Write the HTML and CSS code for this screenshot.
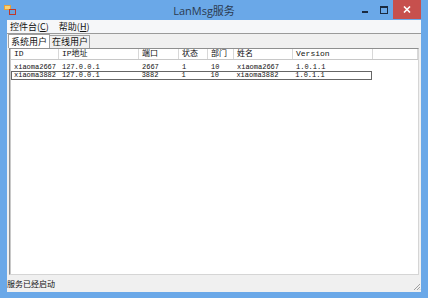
FILE: index.html
```html
<!DOCTYPE html>
<html lang="zh-CN">
<head>
    <meta charset="UTF-8">
    <title>LanMsg服务</title>
    <link rel="stylesheet" href="styles.css">
</head>
<body>
    <div class="window">
        <div class="titlebar">
            <svg class="app-icon" width="12" height="12" viewBox="0 0 12 12">
                <rect x="0" y="1" width="7" height="5" fill="#e8a13a"/>
                <rect x="1" y="2" width="5" height="3" fill="#f7d27a"/>
                <rect x="5" y="5" width="7" height="6" fill="#c0392b"/>
                <rect x="6" y="6" width="5" height="4" fill="#6aa3dd"/>
            </svg>
            <span class="title">LanMsg服务</span>
            <div class="controls">
                <span class="btn-min"></span>
                <span class="btn-max"></span>
                <span class="btn-close">
                    <svg width="8" height="7" viewBox="0 0 8 7">
                        <path d="M1 0.5 L7 6.5 M7 0.5 L1 6.5" stroke="#fff" stroke-width="1.6"/>
                    </svg>
                </span>
            </div>
        </div>
        <div class="client">
            <div class="menubar">
                <span class="menu">控件台(<u>C</u>)</span>
                <span class="menu">帮助(<u>H</u>)</span>
            </div>
            <div class="tabs">
                <span class="tab active">系统用户</span>
                <span class="tab">在线用户</span>
            </div>
            <div class="tabpage">
                <div class="listview">
                    <div class="row header">
                        <span class="c1">ID</span>
                        <span class="c2">IP地址</span>
                        <span class="c3">端口</span>
                        <span class="c4">状态</span>
                        <span class="c5">部门</span>
                        <span class="c6">姓名</span>
                        <span class="c7">Version</span>
                        <span class="c8"></span>
                    </div>
                    <div class="row">
                        <span class="c1">xiaoma2667</span>
                        <span class="c2">127.0.0.1</span>
                        <span class="c3">2667</span>
                        <span class="c4">1</span>
                        <span class="c5">10</span>
                        <span class="c6">xiaoma2667</span>
                        <span class="c7">1.0.1.1</span>
                    </div>
                    <div class="row focused">
                        <span class="c1">xiaoma3882</span>
                        <span class="c2">127.0.0.1</span>
                        <span class="c3">3882</span>
                        <span class="c4">1</span>
                        <span class="c5">10</span>
                        <span class="c6">xiaoma3882</span>
                        <span class="c7">1.0.1.1</span>
                    </div>
                </div>
            </div>
            <div class="statusbar">
                <span>服务已经启动</span>
                <svg class="grip" width="8" height="8" viewBox="0 0 8 8">
                    <path d="M7 1 L1 7 M7 4 L4 7 M7 6.5 L6.5 7" stroke="#a0a0a0" stroke-width="1"/>
                </svg>
            </div>
        </div>
    </div>
</body>
</html>
```

FILE: styles.css
```css
body {
    margin: 0;
    font-family: "Noto Sans CJK SC", "Noto Sans", sans-serif;
    background: #6aa8e8;
}
.window {
    width: 428px;
    height: 298px;
    box-sizing: border-box;
    padding: 0 7px 6px;
    display: flex;
    flex-direction: column;
    background: #6aa8e8;
}
.titlebar {
    height: 20px;
    display: flex;
    align-items: center;
    position: relative;
    flex-shrink: 0;
}
.app-icon {
    margin-left: -3px;
}
.title {
    flex: 1;
    text-align: center;
    font-family: "Open Sans", "Noto Sans CJK SC", sans-serif;
    font-size: 11px;
    color: #2a3a50;
    padding-left: 30px;
}
.controls {
    display: flex;
    align-items: flex-start;
    align-self: flex-start;
    height: 19px;
}
.btn-min {
    width: 6px;
    height: 2px;
    background: #1a2a40;
    margin: 11px 12px 0 0;
}
.btn-max {
    width: 6px;
    height: 5px;
    border: 1px solid #1a2a40;
    border-top-width: 2px;
    margin: 6px 5px 0 0;
}
.btn-close {
    width: 28px;
    height: 19px;
    background: #c7504d;
    display: flex;
    align-items: center;
    justify-content: center;
}
.client {
    flex: 1;
    background: #f0f0f0;
    display: flex;
    flex-direction: column;
    min-height: 0;
}
.menubar {
    height: 13px;
    display: flex;
    align-items: center;
    gap: 10px;
    padding-left: 3px;
    font-size: 9px;
    color: #111;
    background: #f6f7f9;
    border-bottom: 1px solid #9a9a9a;
    flex-shrink: 0;
}
.menu u {
    text-decoration: underline;
}
.tabs {
    height: 14px;
    display: flex;
    align-items: flex-end;
    padding-left: 1px;
    flex-shrink: 0;
}
.tab {
    font-size: 9px;
    line-height: 12px;
    padding: 0 1px 0 2px;
    border: 1px solid #a0a0a0;
    border-bottom: none;
    color: #111;
    background: #f0f0f0;
}
.tab.active {
    background: #fff;
    padding-right: 2px;
    line-height: 13px;
}
.tab + .tab {
    border-left: none;
}
.tabpage {
    flex: 1;
    display: flex;
    padding: 0 2px;
    min-height: 0;
}
.listview {
    flex: 1;
    background: #fff;
    border: 1px solid #8e8f8f;
    border-right-color: #d5d5d5;
    border-bottom-color: #d5d5d5;
    box-shadow: inset 1px 1px 0 #c8c8c8;
    font-family: "Liberation Mono", "Noto Sans CJK SC", monospace;
    font-size: 7px;
    color: #111;
}
.row {
    display: flex;
    height: 8px;
    line-height: 8px;
    margin-left: 1px;
    white-space: nowrap;
}
.row span {
    padding-left: 3px;
    box-sizing: border-box;
    overflow: hidden;
}
.row.header {
    height: 10px;
    line-height: 10px;
    margin-bottom: 3px;
    background: #fff;
    border-bottom: 1px solid #c8c8c8;
    font-size: 8px;
}
.row.header span {
    border-right: 1px solid #d8d8d8;
}
.row.focused {
    width: 361px;
    outline: 1px solid #666;
    outline-offset: -1px;
    height: 9px;
}
.c1 { width: 48px; }
.c2 { width: 80px; }
.c3 { width: 40px; }
.c4 { width: 29px; }
.c5 { width: 26px; }
.c6 { width: 59px; }
.c7 { width: 80px; }
.c8 { flex: 1; }
.statusbar {
    height: 17px;
    display: flex;
    align-items: center;
    justify-content: space-between;
    font-size: 8px;
    color: #111;
    flex-shrink: 0;
}
.grip {
    align-self: flex-end;
    margin-bottom: 1px;
}
```
